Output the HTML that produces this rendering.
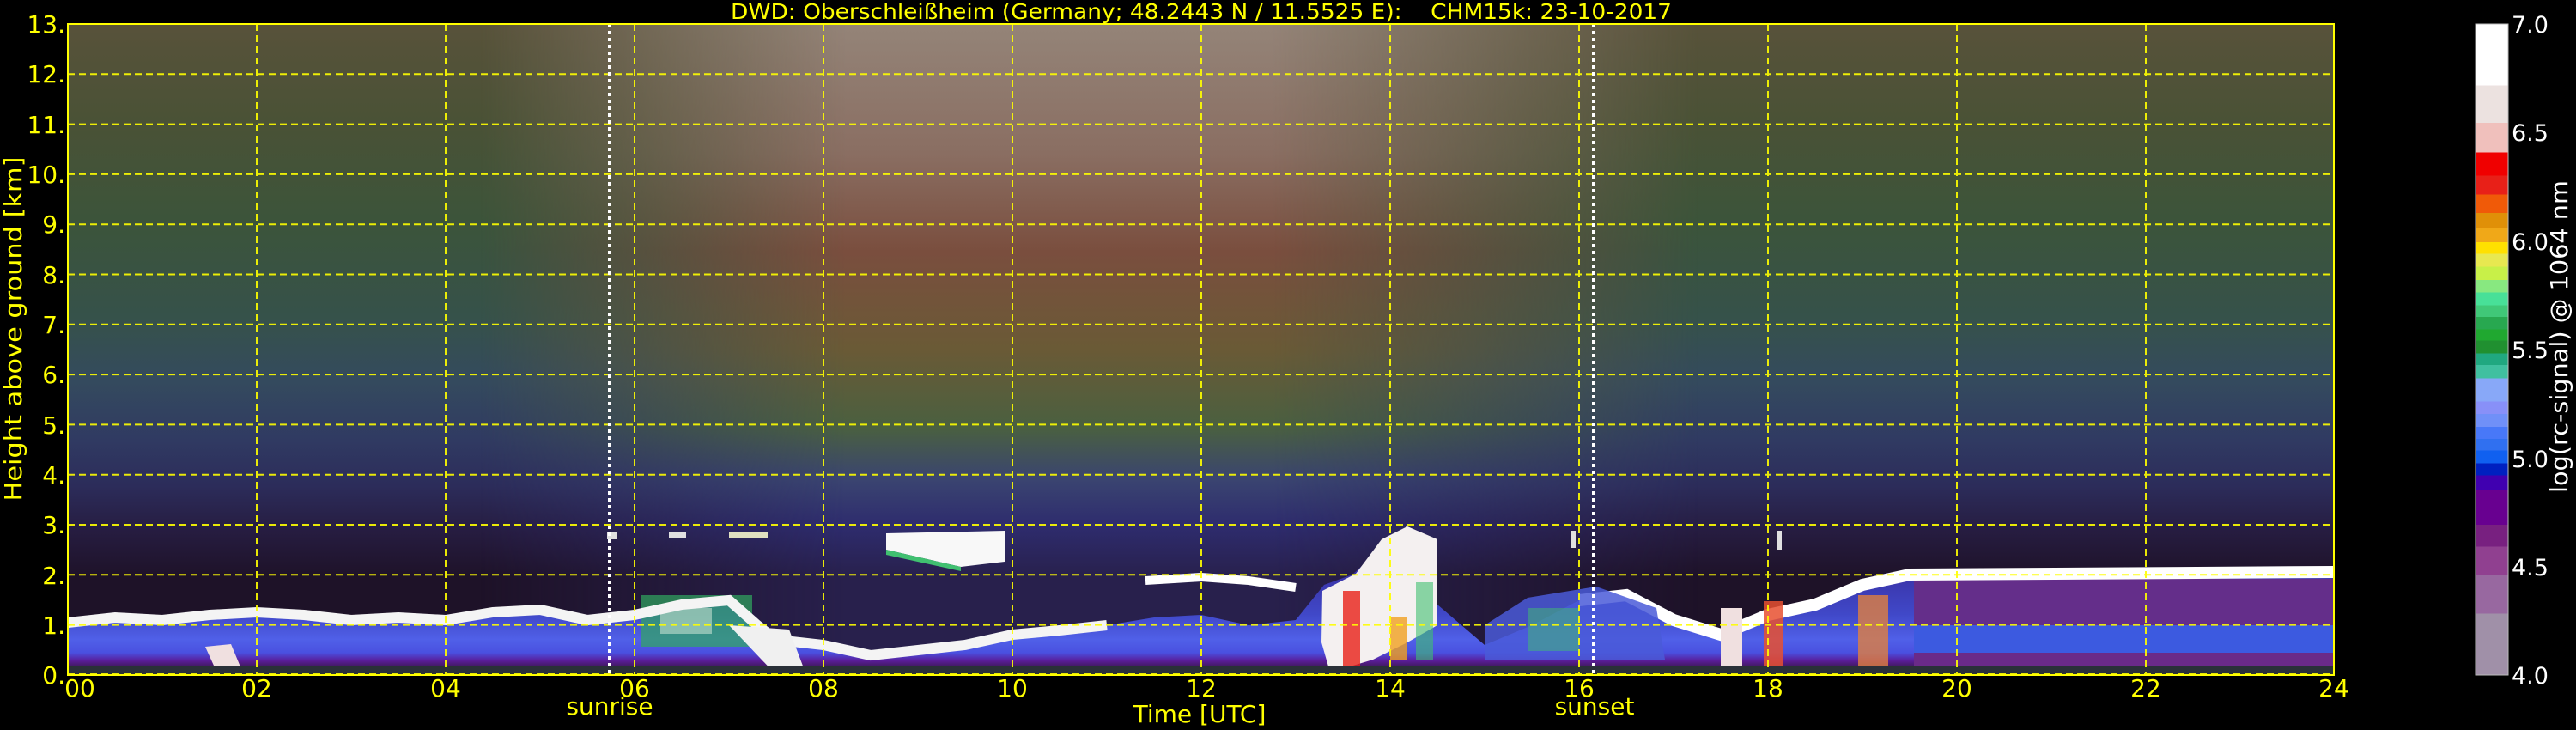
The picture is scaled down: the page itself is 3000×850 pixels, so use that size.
<!DOCTYPE html>
<html><head><meta charset="utf-8"><style>
html,body{margin:0;padding:0;background:#000;}
svg{display:block;}
text{font-family:"DejaVu Sans","Liberation Sans",sans-serif;}
</style></head><body>
<svg width="3000" height="850" viewBox="0 0 3000 850" xmlns="http://www.w3.org/2000/svg">
<defs>
<linearGradient id="night" x1="0" y1="0" x2="0" y2="1">
<stop offset="0" stop-color="#58523a"/>
<stop offset="0.15" stop-color="#4a5236"/>
<stop offset="0.3" stop-color="#3c543a"/>
<stop offset="0.45" stop-color="#36524a"/>
<stop offset="0.55" stop-color="#344a5e"/>
<stop offset="0.64" stop-color="#303a62"/>
<stop offset="0.71" stop-color="#2c2c5a"/>
<stop offset="0.78" stop-color="#261c40"/>
<stop offset="0.85" stop-color="#1e1228"/>
<stop offset="1" stop-color="#1e1228"/>
</linearGradient>
<linearGradient id="day" x1="0" y1="0" x2="0" y2="1">
<stop offset="0" stop-color="#948478"/>
<stop offset="0.2" stop-color="#8a6e62"/>
<stop offset="0.35" stop-color="#7a4e3e"/>
<stop offset="0.5" stop-color="#6a5a36"/>
<stop offset="0.62" stop-color="#4a6040"/>
<stop offset="0.7" stop-color="#3a4470"/>
<stop offset="0.77" stop-color="#2e2c6e"/>
<stop offset="0.85" stop-color="#28204c"/>
<stop offset="1" stop-color="#28204c"/>
</linearGradient>
<linearGradient id="hmask" x1="0" y1="0" x2="1" y2="0">
<stop offset="0" stop-color="#fff" stop-opacity="0"/>
<stop offset="0.3" stop-color="#fff" stop-opacity="1"/>
<stop offset="0.65" stop-color="#fff" stop-opacity="1"/>
<stop offset="1" stop-color="#fff" stop-opacity="0"/>
</linearGradient>
<mask id="dm"><rect x="480" y="0" width="1420" height="758" fill="url(#hmask)"/></mask>
<linearGradient id="bl" gradientUnits="userSpaceOnUse" x1="0" y1="640" x2="0" y2="758">
<stop offset="0" stop-color="#3a34a8"/>
<stop offset="0.4" stop-color="#4048c8"/>
<stop offset="0.65" stop-color="#5060e8"/>
<stop offset="0.78" stop-color="#4a50e0"/>
<stop offset="0.86" stop-color="#5a1c98"/>
<stop offset="0.93" stop-color="#3a1a50"/>
<stop offset="1" stop-color="#202428"/>
</linearGradient>
<linearGradient id="cb" x1="0" y1="0" x2="0" y2="1">
<stop offset="0" stop-color="#ffffff"/><stop offset="0.094" stop-color="#ffffff"/>
<stop offset="0.094" stop-color="#ece2e0"/><stop offset="0.152" stop-color="#ece2e0"/>
<stop offset="0.152" stop-color="#f0c0bc"/><stop offset="0.197" stop-color="#f0c0bc"/>
<stop offset="0.197" stop-color="#f00000"/><stop offset="0.233" stop-color="#f00000"/>
<stop offset="0.233" stop-color="#e82018"/><stop offset="0.262" stop-color="#e82018"/>
<stop offset="0.262" stop-color="#f05a08"/><stop offset="0.29" stop-color="#f05a08"/>
<stop offset="0.29" stop-color="#e09008"/><stop offset="0.313" stop-color="#e09008"/>
<stop offset="0.313" stop-color="#f0a818"/><stop offset="0.335" stop-color="#f0a818"/>
<stop offset="0.335" stop-color="#ffe000"/><stop offset="0.353" stop-color="#ffe000"/>
<stop offset="0.353" stop-color="#e8e850"/><stop offset="0.373" stop-color="#e8e850"/>
<stop offset="0.373" stop-color="#c8f048"/><stop offset="0.393" stop-color="#c8f048"/>
<stop offset="0.393" stop-color="#88e880"/><stop offset="0.412" stop-color="#88e880"/>
<stop offset="0.412" stop-color="#48e098"/><stop offset="0.432" stop-color="#48e098"/>
<stop offset="0.432" stop-color="#40c878"/><stop offset="0.45" stop-color="#40c878"/>
<stop offset="0.45" stop-color="#28a850"/><stop offset="0.469" stop-color="#28a850"/>
<stop offset="0.469" stop-color="#20a830"/><stop offset="0.486" stop-color="#20a830"/>
<stop offset="0.486" stop-color="#209030"/><stop offset="0.506" stop-color="#209030"/>
<stop offset="0.506" stop-color="#20a880"/><stop offset="0.524" stop-color="#20a880"/>
<stop offset="0.524" stop-color="#40c0a0"/><stop offset="0.544" stop-color="#40c0a0"/>
<stop offset="0.544" stop-color="#88a8f8"/><stop offset="0.58" stop-color="#88a8f8"/>
<stop offset="0.58" stop-color="#8890f8"/><stop offset="0.599" stop-color="#8890f8"/>
<stop offset="0.599" stop-color="#7090f8"/><stop offset="0.619" stop-color="#7090f8"/>
<stop offset="0.619" stop-color="#4878f8"/><stop offset="0.637" stop-color="#4878f8"/>
<stop offset="0.637" stop-color="#3070f0"/><stop offset="0.655" stop-color="#3070f0"/>
<stop offset="0.655" stop-color="#1060f0"/><stop offset="0.675" stop-color="#1060f0"/>
<stop offset="0.675" stop-color="#0020c0"/><stop offset="0.693" stop-color="#0020c0"/>
<stop offset="0.693" stop-color="#4000b0"/><stop offset="0.716" stop-color="#4000b0"/>
<stop offset="0.716" stop-color="#680090"/><stop offset="0.769" stop-color="#680090"/>
<stop offset="0.769" stop-color="#782080"/><stop offset="0.803" stop-color="#782080"/>
<stop offset="0.803" stop-color="#904090"/><stop offset="0.847" stop-color="#904090"/>
<stop offset="0.847" stop-color="#9868a0"/><stop offset="0.906" stop-color="#9868a0"/>
<stop offset="0.906" stop-color="#a090a8"/><stop offset="1" stop-color="#a090a8"/>
</linearGradient>
</defs>

<text x="1399" y="22" fill="#ffff00" font-size="25" text-anchor="middle" textLength="1096" lengthAdjust="spacingAndGlyphs" xml:space="preserve">DWD: Oberschleißheim (Germany; 48.2443 N / 11.5525 E):    CHM15k: 23-10-2017</text>

<g transform="translate(79,28)">
<rect x="0" y="0" width="2639" height="758" fill="url(#night)"/>
<rect x="480" y="0" width="1420" height="758" fill="url(#day)" mask="url(#dm)"/>

<path d="M0,758 L0,697 L55,691 L110,694 L165,688 L220,685 L275,688 L330,694 L385,691 L440,694 L495,685 L550,682 L605,694 L660,688 L715,676 L770,671 L803,700 L825,717 L880,723 L935,735 L990,729 L1045,723 L1100,711 L1155,706 L1210,700 L1265,691 L1320,688 L1375,700 L1430,694 L1463,653 L1496,641 L1540,601 L1584,606 L1595,676 L1650,723 L1705,700 L1760,671 L1815,665 L1870,694 L1925,711 L1980,688 L2035,676 L2090,653 L2145,641 L2639,638 L2639,758 Z" fill="url(#bl)"/>
<rect x="2150" y="646" width="489" height="58" fill="#642e8a"/>
<rect x="2150" y="700" width="489" height="32" fill="#3c5ae0"/>
<rect x="2150" y="732" width="489" height="20" fill="#6a2a88"/>
<rect x="2150" y="752" width="489" height="6" fill="#302040"/>
<rect x="667" y="665" width="130" height="60" fill="#30a860" opacity="0.7"/>
<rect x="690" y="680" width="60" height="30" fill="#e0f0e0" opacity="0.5"/>
<polyline points="0,697 55,691 110,694 165,688 220,685 275,688 330,694 385,691 440,694 495,685 550,682 605,694 660,688 715,676 770,671 803,700 825,717 880,723 935,735 990,729 1045,723 1100,711 1155,706 1210,700" fill="none" stroke="#f4f4f4" stroke-width="12"/>
<polyline points="1760,671 1815,665 1870,694 1925,711 1980,688 2035,676 2090,653 2145,641 2639,638" fill="none" stroke="#ffffff" stroke-width="14"/>
<polyline points="1255,648 1320,644 1375,648 1430,656" fill="none" stroke="#ffffff" stroke-width="10"/>
<path d="M770,700 L840,705 L860,758 L825,758 Z" fill="#f0f0f0"/>
<path d="M160,725 L190,722 L205,758 L175,758 Z" fill="#f0e0e0"/>
<path d="M953,593 L1091,590 L1091,626 L1040,632 L953,612 Z" fill="#f8f8f8"/>
<path d="M953,612 L1040,632 L1040,637 L953,618 Z" fill="#40c070"/>
<path d="M1461,660 L1500,640 L1530,600 L1560,585 L1595,600 L1595,700 L1560,720 L1520,740 L1470,755 L1460,720 Z" fill="#f4f0f0"/>
<rect x="1485" y="660" width="20" height="90" fill="#e82018" opacity="0.8"/>
<rect x="1540" y="690" width="20" height="50" fill="#f0a020" opacity="0.8"/>
<rect x="1570" y="650" width="20" height="90" fill="#40c070" opacity="0.6"/>
<path d="M1650,700 L1700,668 L1780,655 L1850,680 L1860,740 L1650,740 Z" fill="#4a5ad8" opacity="0.85"/>
<rect x="1700" y="680" width="60" height="50" fill="#40c070" opacity="0.5"/>
<rect x="1925" y="680" width="25" height="78" fill="#f0e0e0"/>
<rect x="1975" y="672" width="22" height="86" fill="#e85030" opacity="0.85"/>
<rect x="2085" y="665" width="35" height="90" fill="#e08040" opacity="0.8"/>
<rect x="0" y="748" width="2639" height="10" fill="#2a3038"/>
<rect x="628" y="592" width="12" height="8" fill="#e0e0e0"/>
<rect x="700" y="592" width="20" height="6" fill="#e0e0e0"/>
<rect x="770" y="592" width="45" height="6" fill="#e0e0c0"/>
<rect x="1750" y="590" width="6" height="20" fill="#e0e0e0"/>
<rect x="1990" y="590" width="6" height="22" fill="#e0e0e0"/>

<g stroke="#ffff00" stroke-width="2" stroke-dasharray="8,5" fill="none" opacity="0.9">
<path d="M0,58.3H2639M0,116.6H2639M0,174.9H2639M0,233.2H2639M0,291.5H2639M0,349.8H2639M0,408.1H2639M0,466.4H2639M0,524.7H2639M0,583H2639M0,641.3H2639M0,699.6H2639M0,757H2639"/>
<path d="M220,0V758M440,0V758M660,0V758M880,0V758M1100,0V758M1320,0V758M1540,0V758M1760,0V758M1980,0V758M2200,0V758M2420,0V758"/>
</g>
<g stroke="#ffffff" stroke-width="4" stroke-dasharray="4,4">
<line x1="631" y1="0" x2="631" y2="758"/>
<line x1="1777" y1="0" x2="1777" y2="758"/>
</g>
<rect x="0" y="0" width="2639" height="758" fill="none" stroke="#ffff00" stroke-width="2"/>
</g>

<g fill="#ffff00" font-size="28" text-anchor="end">
<text x="76" y="38">13.</text>
<text x="76" y="96">12.</text>
<text x="76" y="155">11.</text>
<text x="76" y="213">10.</text>
<text x="76" y="271">9.</text>
<text x="76" y="330">8.</text>
<text x="76" y="388">7.</text>
<text x="76" y="446">6.</text>
<text x="76" y="505">5.</text>
<text x="76" y="563">4.</text>
<text x="76" y="621">3.</text>
<text x="76" y="680">2.</text>
<text x="76" y="738">1.</text>
<text x="76" y="796">0.</text>
</g>
<text transform="translate(25,383) rotate(-90)" fill="#ffff00" font-size="28" text-anchor="middle" textLength="401" lengthAdjust="spacingAndGlyphs">Height above ground [km]</text>

<g fill="#ffff00" font-size="28" text-anchor="middle">
<text x="93" y="811">00</text>
<text x="299" y="811">02</text>
<text x="519" y="811">04</text>
<text x="739" y="811">06</text>
<text x="959" y="811">08</text>
<text x="1179" y="811">10</text>
<text x="1399" y="811">12</text>
<text x="1619" y="811">14</text>
<text x="1839" y="811">16</text>
<text x="2059" y="811">18</text>
<text x="2279" y="811">20</text>
<text x="2499" y="811">22</text>
<text x="2718" y="811">24</text>
<text x="710" y="832">sunrise</text>
<text x="1857" y="832">sunset</text>
<text x="1397" y="841">Time [UTC]</text>
</g>

<rect x="2883" y="28" width="38" height="758" fill="url(#cb)" stroke="#bbbbbb" stroke-width="1"/>
<g fill="#ffffff" font-size="27">
<text x="2925" y="38">7.0</text>
<text x="2925" y="164">6.5</text>
<text x="2925" y="291">6.0</text>
<text x="2925" y="417">5.5</text>
<text x="2925" y="544">5.0</text>
<text x="2925" y="670">4.5</text>
<text x="2925" y="796">4.0</text>
</g>
<text transform="translate(2990,392) rotate(-90)" fill="#ffffff" font-size="28" text-anchor="middle" textLength="364" lengthAdjust="spacingAndGlyphs">log(rc-signal) @ 1064 nm</text>
</svg>
</body></html>
